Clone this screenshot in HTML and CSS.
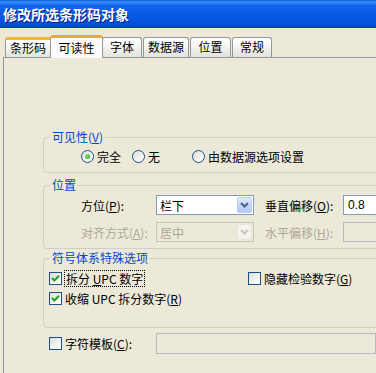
FILE: index.html
```html
<!DOCTYPE html>
<html>
<head>
<meta charset="utf-8">
<link rel="stylesheet" href="styles.css">
</head>
<body>
<div class="window">
  <div class="titlebar">修改所选条形码对象</div>
  <div class="tabs">
    <div class="tab hot w1">条形码</div>
    <div class="tab active w2">可读性</div>
    <div class="tab w3">字体</div>
    <div class="tab w4">数据源</div>
    <div class="tab w5">位置</div>
    <div class="tab w6">常规</div>
  </div>
  <div class="panel">
    <fieldset class="group g-vis">
      <legend>可见性(<u>V</u>)</legend>
      <div class="radios">
        <span class="opt o1"><span class="radio on"></span>完全</span>
        <span class="opt o2"><span class="radio"></span>无</span>
        <span class="opt o3"><span class="radio"></span>由数据源选项设置</span>
      </div>
    </fieldset>

    <fieldset class="group g-pos">
      <legend>位置</legend>
      <div class="posgrid">
        <span class="lbl">方位(<u>P</u>):</span>
        <div class="combo">
          <span class="val">栏下</span>
          <span class="dd"><svg width="9" height="6" viewBox="0 0 9 6"><polyline points="1,1 4.5,4.5 8,1" fill="none" stroke="#4D6185" stroke-width="2"/></svg></span>
        </div>
        <span class="lbl c4">垂直偏移(<u>O</u>):</span>
        <div class="edit"><span class="val num">0.8</span></div>

        <span class="lbl dis">对齐方式(<u>A</u>):</span>
        <div class="combo disabled">
          <span class="val">居中</span>
          <span class="dd"><svg width="9" height="6" viewBox="0 0 9 6"><polyline points="1,1 4.5,4.5 8,1" fill="none" stroke="#C9C7BA" stroke-width="2"/></svg></span>
        </div>
        <span class="lbl dis c4">水平偏移(<u>H</u>):</span>
        <div class="edit disabled"></div>
      </div>
    </fieldset>

    <fieldset class="group g-sym">
      <legend>符号体系特殊选项</legend>
      <div class="checks">
        <span class="chk-item"><span class="check on"><svg width="11" height="11" viewBox="0 0 11 11"><polyline points="2,5 4.3,7.5 9,2.8" fill="none" stroke="#21A121" stroke-width="2"/></svg></span><span class="focus">拆分 <u>U</u>PC 数字</span></span>
        <span class="chk-item c2"><span class="check"></span><span class="txt">隐藏检验数字(<u>G</u>)</span></span>
        <span class="chk-item"><span class="check on"><svg width="11" height="11" viewBox="0 0 11 11"><polyline points="2,5 4.3,7.5 9,2.8" fill="none" stroke="#21A121" stroke-width="2"/></svg></span><span class="txt">收缩 UPC 拆分数字(<u>R</u>)</span></span>
      </div>
    </fieldset>

    <div class="template">
      <span class="chk-item tpl-lbl"><span class="check"></span><span class="txt">字符模板(<u>C</u>):</span></span>
      <div class="edit disabled wide"></div>
    </div>
  </div>
</div>
</body>
</html>
```

FILE: styles.css
```css
html, body {
  margin: 0;
  padding: 0;
}
body {
  width: 376px;
  height: 373px;
  overflow: hidden;
  background: #ECE9D8;
  font-family: "Liberation Sans", "Noto Sans CJK SC", sans-serif;
  font-size: 12px;
  color: #000;
}
.window {
  width: 376px;
  height: 373px;
  overflow: hidden;
}
.titlebar {
  height: 28px;
  line-height: 28px;
  padding-left: 3px;
  color: #fff;
  font-weight: bold;
  font-size: 14px;
  font-family: "Noto Sans CJK SC", sans-serif;
  text-shadow: 1px 1px 0 #0A1883;
  background: linear-gradient(to bottom, #0A5ADB 0%, #3A8CFA 7%, #1266EC 20%, #0758E4 55%, #0050D8 90%, #0042BC 100%);
}
.tabs {
  display: flex;
  align-items: flex-end;
  height: 22px;
  margin-top: 7px;
  padding-left: 5px;
  position: relative;
  z-index: 2;
}
.tab {
  box-sizing: border-box;
  height: 20px;
  line-height: 18px;
  text-align: center;
  border: 1px solid #919B9C;
  border-bottom: none;
  border-radius: 3px 3px 0 0;
  background: linear-gradient(to bottom, #FFFFFF 0%, #F3F3EF 50%, #E4E3DB 100%);
  margin-right: 1px;
  font-family: "Noto Sans CJK SC", sans-serif;
}
.tab.hot {
  border-top: 3px solid #F9B334;
  line-height: 16px;
}
.tab.active {
  height: 23px;
  margin: 0 -1px -1px -2px;
  border-top: 3px solid #F2A534;
  background: #FCFCFE;
  line-height: 19px;
  position: relative;
  z-index: 3;
}
.w1 { width: 46px; }
.w2 { width: 53px; }
.w3 { width: 40px; }
.w4 { width: 46px; }
.w5 { width: 41px; }
.w6 { width: 40px; }

.panel {
  margin-left: 3px;
  border-top: 1px solid #919B9C;
  border-left: 1px solid #919B9C;
  padding: 72px 0 0 39px;
  height: 243px;
}
.group {
  margin: 0;
  padding: 0;
  width: 360px;
  border: 1px solid #D0D0BF;
  border-radius: 4px;
  box-sizing: border-box;
}
.group legend {
  margin-left: 6px;
  padding: 0 2px;
  line-height: 14px;
  color: #0046D5;
  font-family: "Noto Sans CJK SC", sans-serif;
}
u {
  text-decoration: underline;
}
.g-vis {
  padding: 2px 0 6px 0;
}
.radios {
  display: flex;
  align-items: center;
  height: 20px;
  padding-left: 37px;
  font-family: "Noto Sans CJK SC", sans-serif;
}
.opt {
  display: flex;
  align-items: center;
}
.o1 { width: 51px; }
.o2 { width: 60px; }
.radio {
  box-sizing: border-box;
  width: 13px;
  height: 13px;
  border-radius: 50%;
  border: 1px solid #1C5180;
  background: linear-gradient(135deg, #DCDCD7 0%, #FFFFFF 90%);
  margin-right: 3px;
  display: flex;
  align-items: center;
  justify-content: center;
}
.radio.on::after {
  content: "";
  width: 5px;
  height: 5px;
  border-radius: 50%;
  background: radial-gradient(circle at 35% 35%, #7BE57A, #21A121);
}

.g-pos {
  margin-top: 5px;
  padding: 3px 0 6px 0;
}
.posgrid {
  display: grid;
  grid-template-columns: 75px 98px 11px 78px 80px;
  grid-template-rows: 20px 20px;
  row-gap: 7px;
  align-items: center;
  padding-left: 37px;
}
.posgrid .c4 {
  grid-column: 4;
}
.lbl {
  font-family: "Noto Sans CJK SC", sans-serif;
  white-space: nowrap;
}
.lbl.dis {
  color: #ACA899;
}
.combo {
  box-sizing: border-box;
  height: 20px;
  border: 1px solid #7F9DB9;
  background: #fff;
  display: flex;
  align-items: center;
  justify-content: space-between;
  padding: 1px;
}
.combo .val {
  padding-left: 2px;
  font-family: "Noto Sans CJK SC", sans-serif;
}
.dd {
  box-sizing: border-box;
  width: 15px;
  height: 16px;
  border: 1px solid #BBCDF6;
  border-radius: 2px;
  background: linear-gradient(to bottom, #E3EBFE 0%, #C6D6FB 50%, #B4C7F5 100%);
  display: flex;
  align-items: center;
  justify-content: center;
}
.combo.disabled {
  border-color: #C9C7BA;
  background: #ECE9D8;
}
.combo.disabled .val {
  color: #ACA899;
}
.combo.disabled .dd {
  border-color: #E8E6DC;
  background: #F4F3EE;
}
.edit {
  box-sizing: border-box;
  height: 20px;
  border: 1px solid #7F9DB9;
  background: #fff;
  display: flex;
  align-items: center;
}
.edit .num {
  padding-left: 4px;
  font-size: 12px;
}
.edit.disabled {
  border-color: #B5BAC0;
  background: #ECE9D8;
}

.g-sym {
  margin-top: 2px;
  padding: 5px 0 21px 0;
}
.checks {
  display: grid;
  grid-template-columns: 199px 150px;
  grid-template-rows: 16px 16px;
  row-gap: 4px;
  align-items: center;
  padding-left: 5px;
}
.chk-item {
  display: flex;
  align-items: center;
  font-family: "Noto Sans CJK SC", sans-serif;
  white-space: nowrap;
}
.check {
  box-sizing: border-box;
  width: 13px;
  height: 13px;
  border: 1px solid #1C5180;
  background: linear-gradient(135deg, #DCDCD7 0%, #FFFFFF 90%);
  display: flex;
  align-items: center;
  justify-content: center;
  flex: none;
}
.focus {
  margin-left: 2px;
  padding: 0 1px;
  line-height: 15px;
  border: 1px dotted #000;
}
.txt {
  margin-left: 3px;
}

.template {
  margin-top: 5px;
  padding-left: 6px;
  display: flex;
  align-items: center;
  height: 21px;
}
.tpl-lbl {
  width: 107px;
}
.edit.wide {
  height: 21px;
  width: 220px;
  flex: none;
}
```
